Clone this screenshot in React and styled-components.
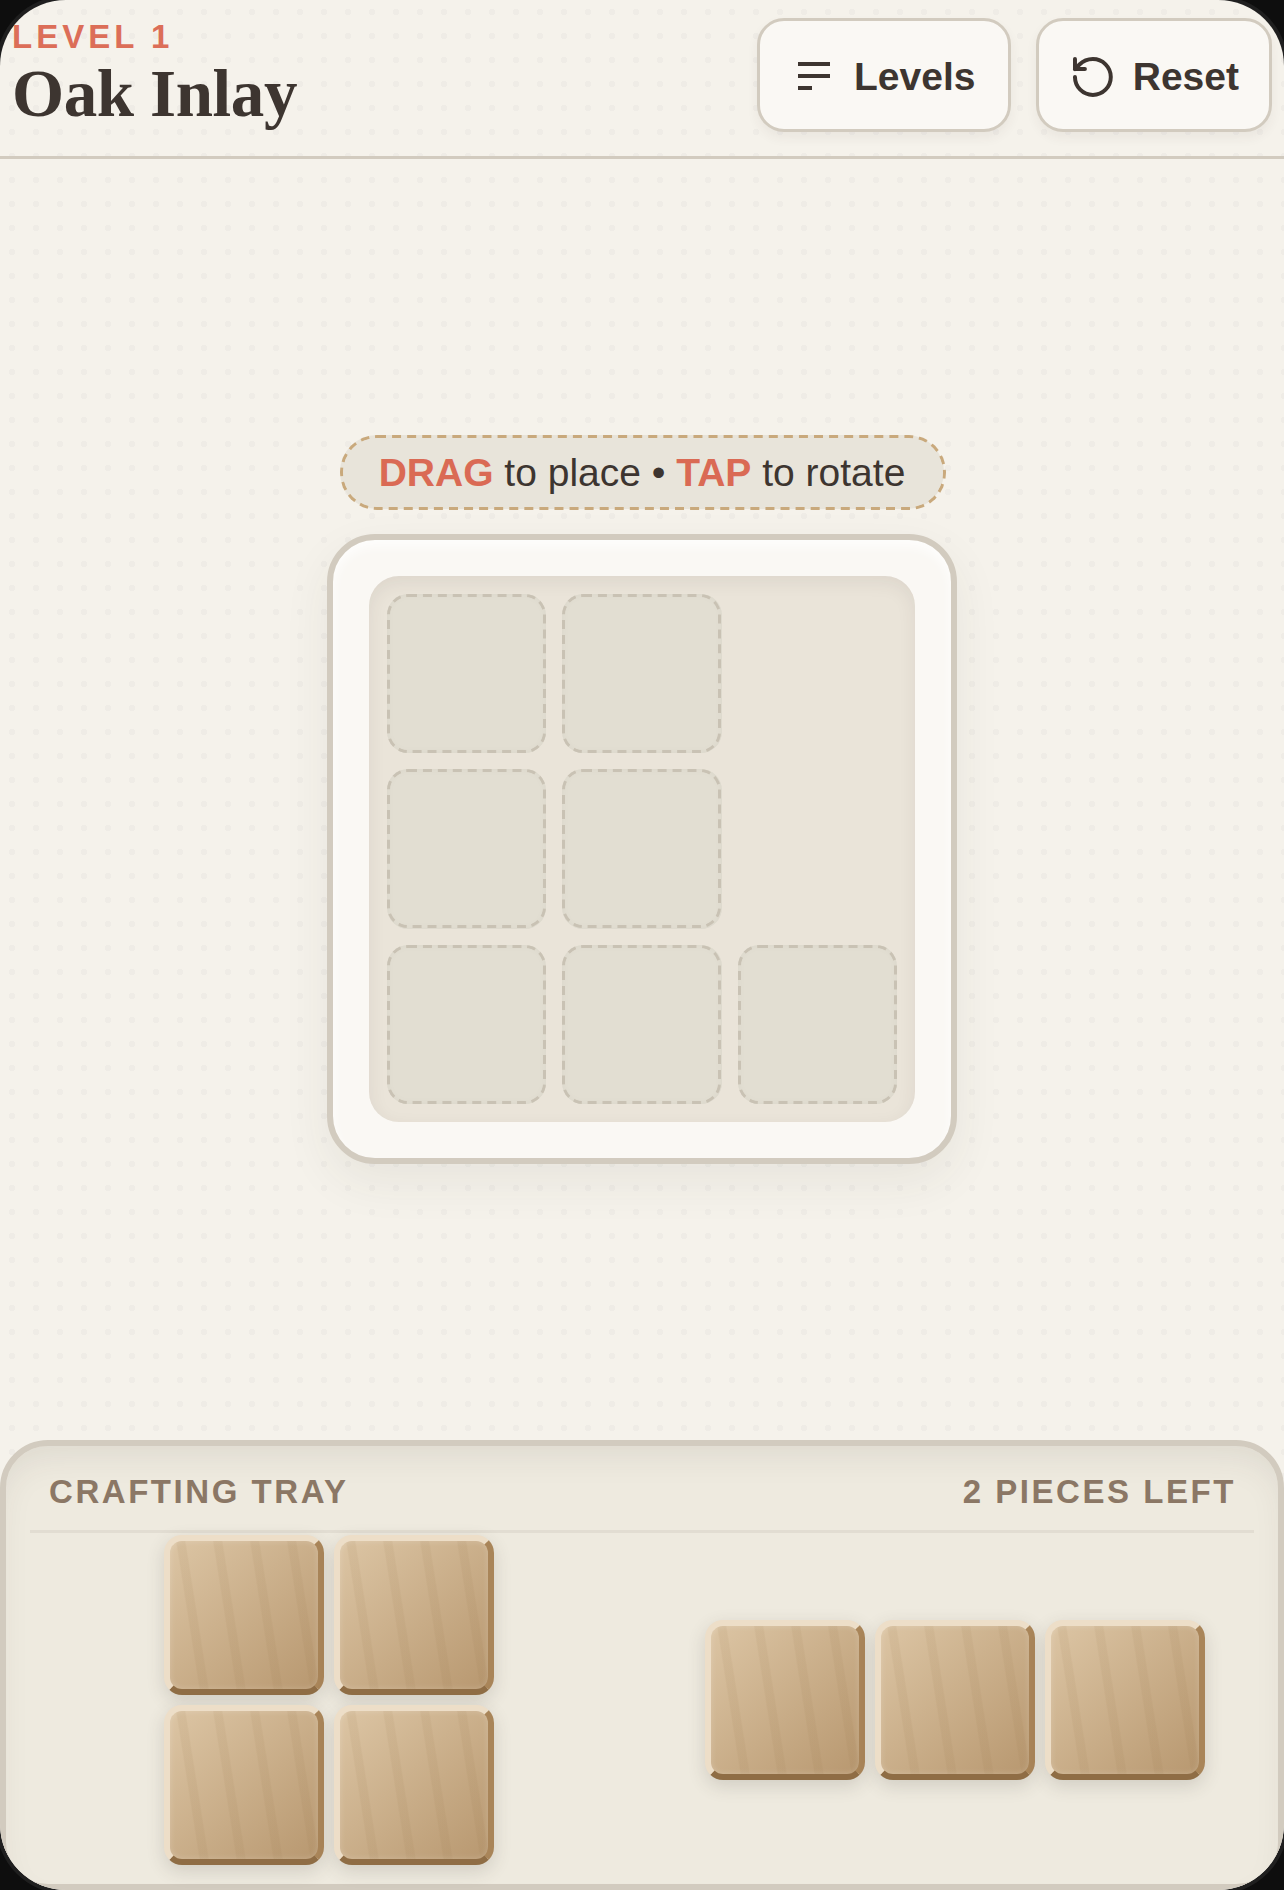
import React from 'react'
import styled, { createGlobalStyle } from 'styled-components'
import { RotateCcw } from 'lucide-react'

const GlobalStyle = createGlobalStyle`
    html, body {
        margin: 0;
        padding: 0;
        background: #0e0e0e;
    }
    * {
        box-sizing: border-box;
    }
`

const Screen = styled.div`
    width: 1284px;
    height: 1890px;
    display: flex;
    flex-direction: column;
    overflow: hidden;
    border-radius: 66px;
    box-shadow: 0 0 0 4px #1f1f1f;
    font-family: "Liberation Sans", Arial, sans-serif;
    color: #3d3530;
    background-color: #f5f2eb;
    background-image: radial-gradient(circle at center, #efece6 3px, transparent 3.4px);
    background-size: 24px 24px;
`

const Header = styled.header`
    height: 159px;
    flex: none;
    display: flex;
    justify-content: space-between;
    align-items: flex-start;
    padding: 18px 12px 0;
    border-bottom: 3px solid #d2cbbf;
`

const TitleBlock = styled.div`
    display: flex;
    flex-direction: column;
    padding-top: 1px;
`

const Level = styled.span`
    font-size: 33px;
    line-height: 36px;
    font-weight: 700;
    letter-spacing: 4px;
    color: #dc6e58;
`

const Title = styled.h1`
    margin: 0;
    font-family: "Liberation Serif", "Times New Roman", serif;
    font-size: 67px;
    line-height: 76px;
    font-weight: 700;
    letter-spacing: -0.4px;
`

const Actions = styled.div`
    display: flex;
    gap: 25px;
`

const ActionButton = styled.button`
    width: ${p => p.$width}px;
    height: 114px;
    display: flex;
    align-items: center;
    gap: 16px;
    padding: 3px 30px 0;
    border: 3px solid #d2cbbf;
    border-radius: 27px;
    background: #faf8f4;
    box-shadow: 0 6px 12px rgba(61, 53, 48, 0.06);
    font-family: inherit;
    font-size: 39px;
    font-weight: 700;
    color: #3d3530;
`

const Main = styled.main`
    flex: 1;
    display: flex;
    flex-direction: column;
    align-items: center;
    justify-content: center;
    gap: 25px;
`

/* 1px dashes drawn at triple size, the browser's dash length follows the border width */
const dashedFrame = (color, radius) => `
    &::before {
        content: '';
        position: absolute;
        top: 0;
        left: 0;
        box-sizing: border-box;
        width: 33.3333%;
        height: 33.3333%;
        border: 1px dashed ${color};
        border-radius: ${radius}px;
        transform: scale(3);
        transform-origin: 0 0;
        pointer-events: none;
    }
`

const Hint = styled.div`
    position: relative;
    height: 74px;
    display: flex;
    align-items: center;
    padding: 2px 39px 0;
    border-radius: 37px;
    background: #e8e4da;
    font-size: 39px;
    white-space: pre;
    ${dashedFrame('#c9a97c', 12.33)}
`

const Key = styled.b`
    color: #da6a54;
`

const Board = styled.div`
    width: 630px;
    height: 630px;
    padding: 36px;
    border: 6px solid #d2cbbf;
    border-radius: 48px;
    background: #faf8f4;
    box-shadow: 0 18px 48px rgba(61, 53, 48, 0.07), inset 0 6px 12px rgba(255, 255, 255, 0.8);
`

const Grid = styled.div`
    height: 100%;
    display: grid;
    grid-template-columns: repeat(3, 1fr);
    grid-template-rows: repeat(3, 1fr);
    gap: 16px;
    padding: 18px;
    border-radius: 30px;
    background: #eae4d9;
    box-shadow: inset 0 6px 18px rgba(61, 53, 48, 0.08);
`

const Slot = styled.div`
    position: relative;
    border-radius: 21px;
    background: #e2ded2;
    box-shadow: inset 0 0 9px rgba(61, 53, 48, 0.04);
    visibility: ${p => (p.$empty ? 'hidden' : 'visible')};
    ${dashedFrame('#c9c2b4', 7)}
`

const Tray = styled.section`
    height: 450px;
    flex: none;
    display: flex;
    flex-direction: column;
    border: 6px solid #d2cbbf;
    border-radius: 48px;
    background: #eeeadf;
    box-shadow: inset 0 18px 36px -12px rgba(61, 53, 48, 0.1);
`

const TrayHeader = styled.div`
    height: 87px;
    flex: none;
    display: flex;
    justify-content: space-between;
    align-items: flex-start;
    margin: 0 24px;
    padding: 28px 18px 0 19px;
    border-bottom: 3px solid #e2ddd2;
    font-size: 33px;
    line-height: 36px;
    font-weight: 700;
    letter-spacing: 2.55px;
    color: #8b7765;
`

const TrayBody = styled.div`
    flex: 1;
    display: grid;
    grid-template-columns: repeat(2, 626px);
    justify-content: center;
    justify-items: center;
    align-items: center;
    padding-bottom: 18px;
`

const PieceGroup = styled.div`
    display: grid;
    grid-template-columns: repeat(${p => p.$cols}, 160px);
    grid-auto-rows: 160px;
    gap: 10px;
`

const Piece = styled.div`
    border: 6px solid;
    border-color: #eddec8 #a98559 #8f6d45 #eddec8;
    border-radius: 18px;
    background-color: #cbb08a;
    background-image:
        repeating-linear-gradient(81deg, rgba(139, 105, 60, 0.08) 0 1px, transparent 2.5px 28.5px, rgba(139, 105, 60, 0.08) 30px 36.5px),
        linear-gradient(135deg, #dcc5a4, #b89870);
    box-shadow: 0 6px 18px rgba(61, 53, 48, 0.16), inset 0 0 6px rgba(255, 255, 255, 0.2);
`

const LevelsIcon = () => (
    <svg width="48" height="48" viewBox="0 0 48 48" fill="none" stroke="#3d3530" strokeWidth="4">
        <path d="M8 11h32M8 23h32M8 35h14" />
    </svg>
)

const slots = [false, false, true, false, false, true, false, false, false]

const App = () => {
    return (
        <Screen>
            <GlobalStyle />
            <Header>
                <TitleBlock>
                    <Level>LEVEL 1</Level>
                    <Title>Oak Inlay</Title>
                </TitleBlock>
                <Actions>
                    <ActionButton $width={254}>
                        <LevelsIcon />
                        Levels
                    </ActionButton>
                    <ActionButton $width={236}>
                        <RotateCcw size={48} strokeWidth={2} color="#3d3530" />
                        Reset
                    </ActionButton>
                </Actions>
            </Header>
            <Main>
                <Hint>
                    <span><Key>DRAG</Key> to place • <Key>TAP</Key> to rotate</span>
                </Hint>
                <Board>
                    <Grid>
                        {slots.map((empty, i) => (
                            <Slot key={i} $empty={empty} />
                        ))}
                    </Grid>
                </Board>
            </Main>
            <Tray>
                <TrayHeader>
                    <span>CRAFTING TRAY</span>
                    <span>2 PIECES LEFT</span>
                </TrayHeader>
                <TrayBody>
                    <PieceGroup $cols={2}>
                        <Piece />
                        <Piece />
                        <Piece />
                        <Piece />
                    </PieceGroup>
                    <PieceGroup $cols={3}>
                        <Piece />
                        <Piece />
                        <Piece />
                    </PieceGroup>
                </TrayBody>
            </Tray>
        </Screen>
    )
}

export default App
